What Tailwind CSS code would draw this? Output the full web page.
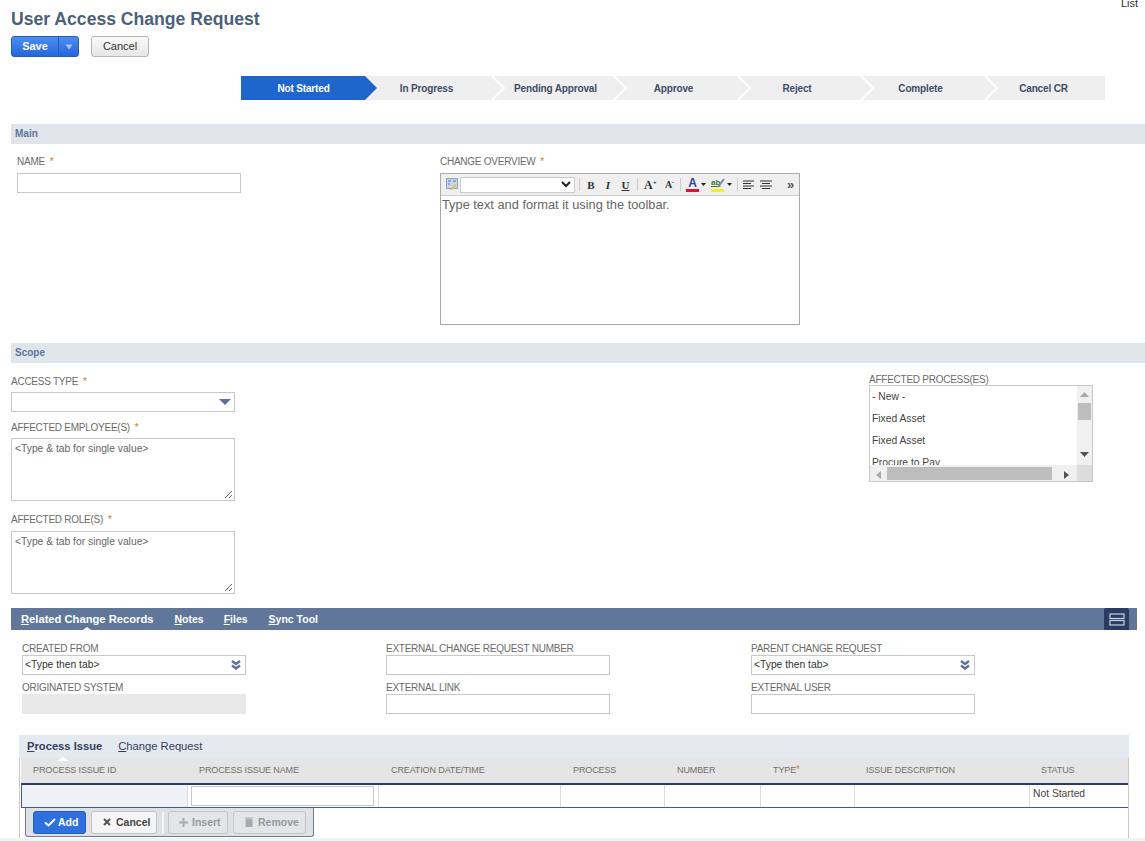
<!DOCTYPE html>
<html>
<head>
<meta charset="utf-8">
<script src="https://cdn.jsdelivr.net/npm/@tailwindcss/browser@4"></script>
</head>
<body class="bg-white">
<div class="relative h-[841px] w-[1145px] overflow-hidden font-['Liberation_Sans',Arial,sans-serif] text-[10px] tracking-[-0.25px] text-[#6b6b6b]">
  <div class="absolute right-[7px] top-[-3px] text-[11px] leading-[13px] tracking-normal text-[#333]">List</div>

  <header class="pl-[11px] pt-[9px] tracking-normal">
    <h1 class="h-[20px] text-[17.6px] font-bold leading-[20px] text-[#4d5f79]">User Access Change Request</h1>
    <div class="mt-[7px] flex h-[21px] items-stretch">
      <div class="flex w-[68px] overflow-hidden rounded-[3px] border border-[#1f5fb8] bg-gradient-to-b from-[#4d8cf0] to-[#2467dc] text-white">
        <div class="flex w-[46px] items-center justify-center text-[11px] font-bold">Save</div>
        <div class="flex flex-1 items-center justify-center border-l border-[#1f5fb8]">
          <svg width="8" height="6" viewBox="0 0 8 6"><path d="M0.5 0.5h7L4 5.500z" fill="#a9c4ee"/></svg>
        </div>
      </div>
      <div class="ml-[12px] flex w-[58px] items-center justify-center rounded-[3px] border border-[#b5b5b5] bg-gradient-to-b from-[#fafafa] to-[#e6e6e6] text-[11px] text-[#333]">Cancel</div>
    </div>
  </header>

  <nav class="ml-[241px] mt-[19px] flex h-[24px] w-[864px] bg-[#efefef] text-[10px] font-bold tracking-[-0.15px] text-[#3d4d68]">
    <div class="relative flex w-[124px] items-center justify-center bg-[#1f66cc] pl-[1px] text-white">Not Started
      <svg class="absolute left-[124px] top-0 z-10" width="12" height="24" viewBox="0 0 12 24"><path d="M0 0l12 12L0 24z" fill="#1f66cc"/></svg>
    </div>
    <div class="relative flex w-[123px] items-center justify-center">In Progress
      <svg class="absolute left-[125px] top-0 z-10" width="16" height="24" viewBox="0 0 16 24"><path d="M2 0l12 12L2 24" fill="none" stroke="#fff" stroke-width="2"/></svg>
    </div>
    <div class="relative flex w-[124px] items-center justify-center pl-[11px]">Pending Approval
      <svg class="absolute left-[124px] top-0 z-10" width="16" height="24" viewBox="0 0 16 24"><path d="M2 0l12 12L2 24" fill="none" stroke="#fff" stroke-width="2"/></svg>
    </div>
    <div class="relative flex w-[123px] items-center justify-center">Approve
      <svg class="absolute left-[124px] top-0 z-10" width="16" height="24" viewBox="0 0 16 24"><path d="M2 0l12 12L2 24" fill="none" stroke="#fff" stroke-width="2"/></svg>
    </div>
    <div class="relative flex w-[124px] items-center justify-center">Reject
      <svg class="absolute left-[124px] top-0 z-10" width="16" height="24" viewBox="0 0 16 24"><path d="M2 0l12 12L2 24" fill="none" stroke="#fff" stroke-width="2"/></svg>
    </div>
    <div class="relative flex w-[123px] items-center justify-center">Complete
      <svg class="absolute left-[124px] top-0 z-10" width="16" height="24" viewBox="0 0 16 24"><path d="M2 0l12 12L2 24" fill="none" stroke="#fff" stroke-width="2"/></svg>
    </div>
    <div class="flex w-[123px] items-center justify-center">Cancel CR</div>
  </nav>

  <div class="ml-[11px] mt-[24px] flex h-[20px] items-center bg-[#e0e5ec] pb-[2px] pl-[4px] text-[10px] font-bold tracking-normal text-[#63759a]">Main</div>

  <section class="flex h-[199px]">
    <div class="ml-[17px] mt-[11px] w-[224px]">
      <div class="h-[18px] pt-[1px] leading-[12px]">NAME <span class="ml-[2px] text-[11px] leading-[10px] text-[#c08a3a]">*</span></div>
      <div class="h-[20px] border border-[#c8c8c8]"></div>
    </div>
    <div class="ml-[199px] mt-[11px] w-[360px]">
      <div class="h-[18px] pt-[1px] leading-[12px]">CHANGE OVERVIEW <span class="ml-[2px] text-[11px] leading-[10px] text-[#c08a3a]">*</span></div>
      <div class="h-[152px] border border-[#aaa] tracking-normal">
        <div class="flex h-[22px] items-center border-b border-[#ccc] bg-[#efefef] text-[#333]">
          <svg class="ml-[5px]" width="12" height="13" viewBox="0 0 12 13"><rect x="0.5" y="0.5" width="11" height="10" fill="#c9d6ee" stroke="#8ea2c8"/><path d="M2 3h3M7 3h3M2 6h2" stroke="#5877b5"/><path d="M4 12l5-6 2 1-5 5z" fill="#e5c350"/></svg>
          <div class="ml-[2px] flex h-[16px] w-[115px] items-center justify-end border border-[#ccc] bg-white pr-[3px]">
            <svg width="10" height="7" viewBox="0 0 10 7"><path d="M1 1l4 4 4-4" fill="none" stroke="#222" stroke-width="2"/></svg>
          </div>
          <div class="ml-[4px] h-[13px] w-px bg-[#ccc]"></div>
          <div class="ml-[6px] w-[10px] text-center font-['Liberation_Serif',serif] text-[11px] font-bold leading-[12px]">B</div>
          <div class="ml-[8px] w-[8px] text-center font-['Liberation_Serif',serif] text-[11px] font-bold italic leading-[12px]">I</div>
          <div class="ml-[9px] w-[9px] text-center font-['Liberation_Serif',serif] text-[11px] font-bold leading-[12px] underline">U</div>
          <div class="ml-[7px] h-[13px] w-px bg-[#ccc]"></div>
          <div class="ml-[6px] w-[9px] font-['Liberation_Serif',serif] text-[12px] font-bold leading-[12px]">A</div>
          <div class="mb-[5px] w-[4px] text-[6px] font-bold leading-[6px]">+</div>
          <div class="ml-[8px] w-[7px] font-['Liberation_Serif',serif] text-[10px] font-bold leading-[12px]">A</div>
          <div class="mb-[5px] w-[4px] text-[6px] font-bold leading-[6px]">-</div>
          <div class="ml-[4px] h-[13px] w-px bg-[#ccc]"></div>
          <div class="ml-[5px] flex w-[13px] flex-col items-center">
            <span class="h-[10px] text-[12px] font-bold leading-[10px] text-[#2b3f9e]">A</span>
            <span class="mt-[1px] h-[3px] w-[13px] bg-[#e0102a]"></span>
          </div>
          <svg class="ml-[2px]" width="5" height="3" viewBox="0 0 5 3"><path d="M0 0h5L2.500 3z" fill="#222"/></svg>
          <div class="relative ml-[5px] flex w-[15px] flex-col items-start">
            <span class="h-[10px] text-[8px] font-bold leading-[9px] text-[#2f7a2f] underline">ab</span>
            <span class="mt-[1px] h-[3px] w-[13px] bg-[#f2ee2a]"></span>
            <svg class="absolute left-[6px] top-0" width="9" height="10" viewBox="0 0 9 10"><path d="M1 9l6-8" stroke="#7b8aa5" stroke-width="2"/></svg>
          </div>
          <svg class="ml-[1px]" width="5" height="3" viewBox="0 0 5 3"><path d="M0 0h5L2.500 3z" fill="#222"/></svg>
          <div class="ml-[5px] h-[13px] w-px bg-[#ccc]"></div>
          <svg class="ml-[5px]" width="11" height="10" viewBox="0 0 11 10"><path d="M0 1h11M0 3.500h8M0 6h11M0 8.500h8" stroke="#333"/></svg>
          <svg class="ml-[6px]" width="12" height="10" viewBox="0 0 12 10"><path d="M0 1h12M2 3.500h8M0 6h12M2 8.500h8" stroke="#333"/></svg>
          <div class="ml-[15px] text-[13px] font-bold leading-[12px] text-[#555]">»</div>
        </div>
        <div class="px-[1px] pt-[1px] text-[12.8px] leading-[16px] text-[#666]">Type text and format it using the toolbar.</div>
      </div>
    </div>
  </section>

  <div class="ml-[11px] flex h-[20px] items-center bg-[#e0e5ec] pb-[1px] pl-[4px] text-[10px] font-bold tracking-normal text-[#63759a]">Scope</div>

  <section class="flex h-[245px]">
    <div class="ml-[11px] w-[224px] pt-[12px]">
      <div class="h-[17px] pt-[1px] leading-[12px]">ACCESS TYPE <span class="ml-[2px] text-[11px] leading-[10px] text-[#c08a3a]">*</span></div>
      <div class="flex h-[20px] items-center justify-end border border-[#c8c8c8] pr-[3px]">
        <svg width="12" height="6" viewBox="0 0 12 6"><path d="M0 0h12L6 6z" fill="#5c6f95"/></svg>
      </div>
      <div class="mt-[9px] h-[17px] pt-[1px] leading-[12px]">AFFECTED EMPLOYEE(S) <span class="ml-[2px] text-[11px] leading-[10px] text-[#c08a3a]">*</span></div>
      <div class="relative h-[63px] border border-[#c8c8c8] px-[3px] pt-[4px] text-[10.3px] leading-[12px] tracking-normal text-[#666]">&lt;Type &amp; tab for single value&gt;
        <svg class="absolute bottom-[1px] right-[1px]" width="9" height="9" viewBox="0 0 9 9"><path d="M1 8l7-7M5 8l3-3" stroke="#666"/></svg>
      </div>
      <div class="mt-[12px] h-[18px] pt-[1px] leading-[12px]">AFFECTED ROLE(S) <span class="ml-[2px] text-[11px] leading-[10px] text-[#c08a3a]">*</span></div>
      <div class="relative h-[63px] border border-[#c8c8c8] px-[3px] pt-[4px] text-[10.3px] leading-[12px] tracking-normal text-[#666]">&lt;Type &amp; tab for single value&gt;
        <svg class="absolute bottom-[1px] right-[1px]" width="9" height="9" viewBox="0 0 9 9"><path d="M1 8l7-7M5 8l3-3" stroke="#666"/></svg>
      </div>
    </div>
    <div class="ml-[634px] w-[224px] pt-[10px]">
      <div class="h-[12px] pt-[1px] leading-[12px]">AFFECTED PROCESS(ES)</div>
      <div class="grid h-[97px] grid-cols-[207px_1fr] grid-rows-[79px_1fr] overflow-hidden border border-[#c8c8c8]">
        <div class="overflow-hidden pl-[2px] text-[10.3px] leading-[22px] tracking-normal text-[#444]">
          <div>- New -</div>
          <div>Fixed Asset</div>
          <div>Fixed Asset</div>
          <div>Procure to Pay</div>
        </div>
        <div class="relative bg-[#f0f0f0]">
          <svg class="absolute left-[3px] top-[6px]" width="9" height="5" viewBox="0 0 9 5"><path d="M4.500 0L9 5H0z" fill="#aaa"/></svg>
          <div class="absolute left-[1px] top-[17px] h-[17px] w-[13px] bg-[#bdbdbd]"></div>
          <svg class="absolute bottom-[8px] left-[3px]" width="9" height="5" viewBox="0 0 9 5"><path d="M0 0h9L4.500 5z" fill="#555"/></svg>
        </div>
        <div class="relative bg-[#f0f0f0]">
          <svg class="absolute left-[6px] top-[6px]" width="5" height="8" viewBox="0 0 5 8"><path d="M5 0v8L0 4z" fill="#aaa"/></svg>
          <div class="absolute left-[17px] top-[2px] h-[13px] w-[165px] bg-[#bdbdbd]"></div>
          <svg class="absolute left-[194px] top-[6px]" width="5" height="8" viewBox="0 0 5 8"><path d="M0 0l5 4-5 4z" fill="#555"/></svg>
        </div>
        <div class="bg-[#dcdcdc]"></div>
      </div>
    </div>
  </section>

  <div class="ml-[11px] flex h-[22px] w-[1126px] items-center bg-[#607799] text-[10.5px] font-bold tracking-normal text-white">
    <div class="relative ml-[10px] text-[11.2px]"><span class="underline">R</span>elated Change Records
      <svg class="absolute bottom-[-5px] left-[59px]" width="14" height="5" viewBox="0 0 14 5"><path d="M0 5l7-5 7 5z" fill="#fff"/></svg>
    </div>
    <div class="ml-[21px] pt-[1px]"><span class="underline">N</span>otes</div>
    <div class="ml-[20px] pt-[1px]"><span class="underline">F</span>iles</div>
    <div class="ml-[21px] pt-[1px]"><span class="underline">S</span>ync Tool</div>
    <div class="ml-auto mr-[8px] flex h-[22px] w-[25px] items-center justify-center rounded-t-[2px] bg-[#2b3c63]">
      <svg width="16" height="13" viewBox="0 0 16 13"><rect x="1" y="1" width="14" height="4.500" fill="none" stroke="#c8d0e0" stroke-width="1.200"/><rect x="1" y="7.500" width="14" height="4.500" fill="none" stroke="#c8d0e0" stroke-width="1.200"/></svg>
    </div>
  </div>

  <section class="ml-[22px] mt-[13px] grid h-[92px] w-[953px] grid-cols-[364px_365px_224px] grid-rows-[33px_33px] content-start gap-y-[6px]">
    <div class="w-[224px]"><div class="h-[12px] leading-[12px]">CREATED FROM</div>
      <div class="flex h-[20px] items-center justify-between border border-[#c8c8c8] pl-[2px] pr-[4px] text-[10.3px] tracking-normal text-[#333]"><span>&lt;Type then tab&gt;</span><svg width="10" height="10" viewBox="0 0 10 10"><path d="M1 1l4 3 4-3M1 5.500l4 3 4-3" fill="none" stroke="#5c6f95" stroke-width="2.400"/></svg></div></div>
    <div class="w-[224px]"><div class="h-[12px] leading-[12px]">EXTERNAL CHANGE REQUEST NUMBER</div><div class="h-[20px] border border-[#c8c8c8]"></div></div>
    <div class="w-[224px]"><div class="h-[12px] leading-[12px]">PARENT CHANGE REQUEST</div>
      <div class="flex h-[20px] items-center justify-between border border-[#c8c8c8] pl-[2px] pr-[4px] text-[10.3px] tracking-normal text-[#333]"><span>&lt;Type then tab&gt;</span><svg width="10" height="10" viewBox="0 0 10 10"><path d="M1 1l4 3 4-3M1 5.500l4 3 4-3" fill="none" stroke="#5c6f95" stroke-width="2.400"/></svg></div></div>
    <div class="w-[224px]"><div class="h-[12px] leading-[12px]">ORIGINATED SYSTEM</div><div class="h-[20px] bg-[#e9e9e9]"></div></div>
    <div class="w-[224px]"><div class="h-[12px] leading-[12px]">EXTERNAL LINK</div><div class="h-[20px] border border-[#c8c8c8]"></div></div>
    <div class="w-[224px]"><div class="h-[12px] leading-[12px]">EXTERNAL USER</div><div class="h-[20px] border border-[#c8c8c8]"></div></div>
  </section>

  <section class="ml-[19px] w-[1110px] tracking-normal">
    <div class="flex h-[23px] items-center bg-[#e5e9f0] pl-[8px] text-[11.2px] text-[#33415c]">
      <div class="relative font-bold"><span class="underline">P</span>rocess Issue
        <svg class="absolute bottom-[-6px] left-[30px]" width="12" height="4" viewBox="0 0 12 4"><path d="M0 4l6-4 6 4z" fill="#fff"/></svg>
      </div>
      <div class="ml-[16px]"><span class="underline">C</span>hange Request</div>
    </div>
    <div class="border-l border-r border-[#c8c8c8] pb-[3px]">
      <div class="ml-[1px] grid h-[25px] grid-cols-[166px_191px_182px_104px_96px_94px_175px_1fr] items-center bg-[#e5e5e5] text-[9px] tracking-[-0.12px] text-[#6f6f6f]">
        <div class="pl-[12px]">PROCESS ISSUE ID</div>
        <div class="pl-[12px]">PROCESS ISSUE NAME</div>
        <div class="pl-[13px]">CREATION DATE/TIME</div>
        <div class="pl-[13px]">PROCESS</div>
        <div class="pl-[13px]">NUMBER</div>
        <div class="pl-[13px]">TYPE<span class="text-[10px] leading-[9px] text-[#c08a3a]">*</span></div>
        <div class="pl-[12px]">ISSUE DESCRIPTION</div>
        <div class="pl-[12px]">STATUS</div>
      </div>
      <div class="ml-[1px] grid h-[25px] grid-cols-[166px_191px_182px_104px_96px_94px_175px_1fr] border-b border-l border-t-2 border-[#4a5a7c] border-t-[#2b3c63] text-[10.3px] text-[#444]">
        <div class="border-r border-[#ddd] bg-[#eef1f6]"></div>
        <div class="border-r border-[#ddd] px-[3px] pt-[1px]"><div class="h-[20px] w-[183px] border border-[#c8c8c8]"></div></div>
        <div class="border-r border-[#ddd]"></div>
        <div class="border-r border-[#ddd]"></div>
        <div class="border-r border-[#ddd]"></div>
        <div class="border-r border-[#ddd]"></div>
        <div class="border-r border-[#ddd]"></div>
        <div class="pl-[3px] pt-[3px] leading-[12px]">Not Started</div>
      </div>
      <div class="ml-[5px] flex h-[29px] w-[289px] items-center rounded-b-[3px] border border-t-0 border-[#6b7a96] bg-[#dfe1e5] pl-[7px] text-[10.5px] font-bold leading-[14px]">
        <div class="flex h-[23px] w-[53px] items-center justify-start gap-[2px] rounded-[3px] border border-[#1f5fb8] bg-[#2f6fe0] pl-[10px] text-white">
          <svg width="12" height="9" viewBox="0 0 12 9"><path d="M1 4.500l3.500 3L11 1" fill="none" stroke="#fff" stroke-width="2"/></svg><span>Add</span></div>
        <div class="ml-[5px] flex h-[23px] w-[66px] items-center justify-start gap-[5px] rounded-[3px] border border-[#c4c4c4] bg-[#f5f5f5] pl-[11px] text-[#444]">
          <svg width="8" height="8" viewBox="0 0 8 8"><path d="M1 1l6 6M7 1L1 7" stroke="#555" stroke-width="2"/></svg><span>Cancel</span></div>
        <div class="ml-[5px] h-[21px] w-[2px] bg-[#f5f5f5]"></div>
        <div class="ml-[4px] flex h-[23px] w-[60px] items-center justify-start gap-[4px] rounded-[3px] border border-[#c4c4c4] bg-[#e4e5e8] pl-[10px] text-[#999]">
          <svg width="9" height="9" viewBox="0 0 9 9"><path d="M4.500 0v9M0 4.500h9" stroke="#aaa" stroke-width="2"/></svg><span>Insert</span></div>
        <div class="ml-[5px] flex h-[23px] w-[73px] items-center justify-start gap-[5px] rounded-[3px] border border-[#c4c4c4] bg-[#e4e5e8] pl-[11px] text-[#999]">
          <svg width="8" height="10" viewBox="0 0 8 10"><path d="M0 1h8M1 2.500h6V10H1z" fill="#aaa" stroke="#aaa"/></svg><span>Remove</span></div>
      </div>
    </div>
  </section>
  <div class="absolute bottom-0 left-0 h-[3px] w-full bg-[#f2f2f2]"></div>
</div>
</body>
</html>
